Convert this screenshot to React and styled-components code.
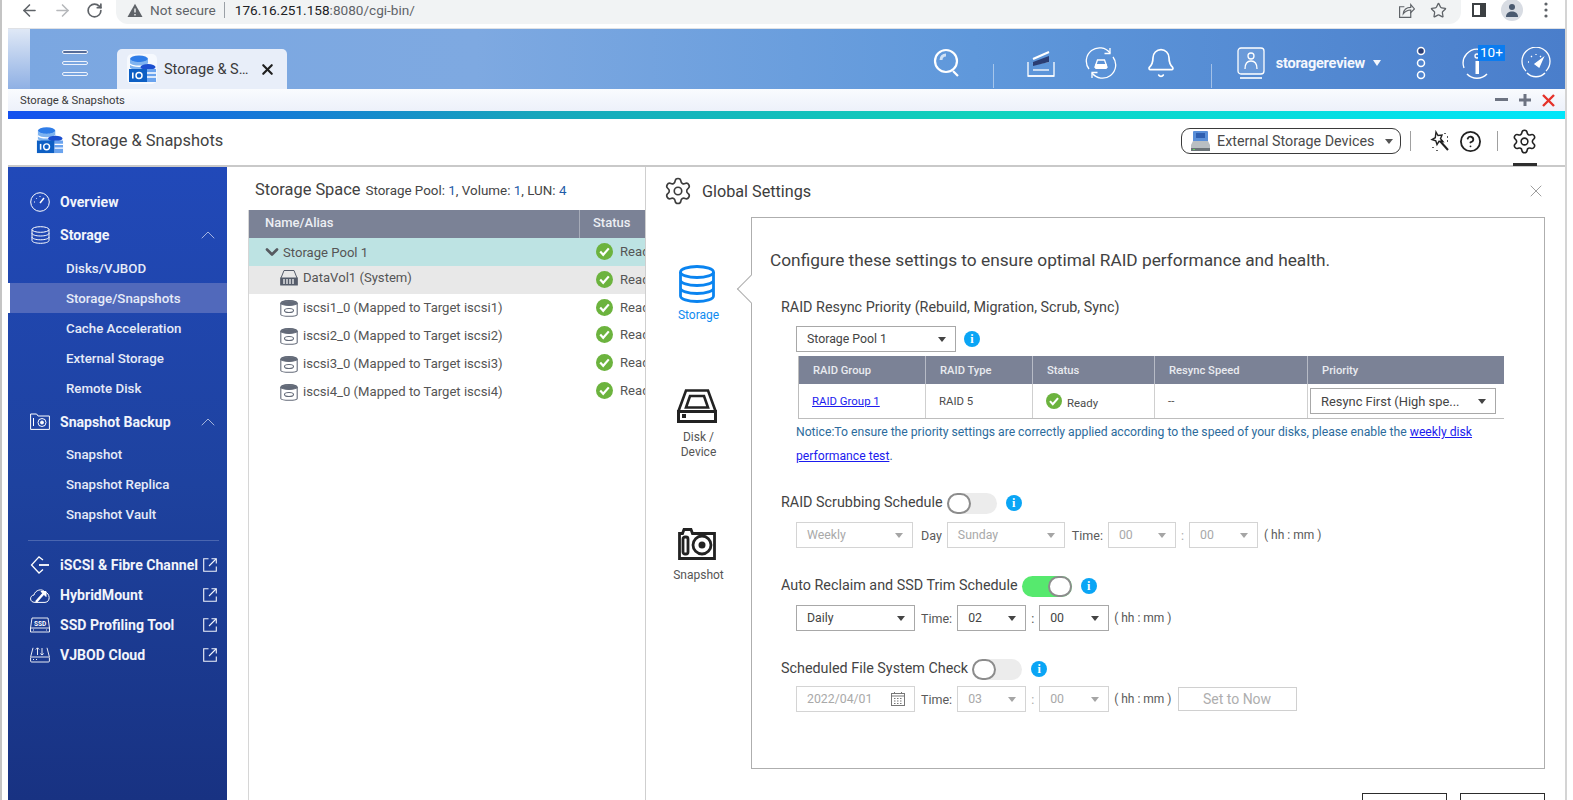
import React from 'react';
import styled, { createGlobalStyle } from 'styled-components';
import { Settings, Bell, Star, ArrowLeft, ArrowRight, RotateCw, ChevronUp, ChevronDown, X, HelpCircle } from 'lucide-react';

const Global = createGlobalStyle`
  html, body { margin: 0; padding: 0; height: 800px; overflow: hidden; background: #fff; }
  #root { height: 800px; }
  * { box-sizing: border-box; }
`;

const Page = styled.div`
  width: 1573px; height: 800px; overflow: hidden; display: flex; flex-direction: column;
  background: #fff; position: relative; padding: 0 6px 0 6px;
  font-family: Roboto, "Liberation Sans", sans-serif; color: #444;
  border-left: 2px solid #c4c4c4;
`;

const Shell = styled.div`
  flex: 1; display: flex; flex-direction: column; min-height: 0; border-right: 2px solid #d4d4d4;
`;

/* Browser toolbar */
const Toolbar = styled.div`height: 29px; flex: none; display: flex; align-items: flex-start; background: #fff; border-bottom: 1px solid #dfe1e5;`;
const NavIcons = styled.div`width: 108px; flex: none; height: 20px; display: flex; align-items: center; color: #5f6368; gap: 14px; padding-left: 12px;`;
const Omni = styled.div`
  width: 1345px; height: 24px; flex: none; background: #f1f3f4; border-radius: 0 0 12px 12px;
  display: flex; align-items: center; padding: 0 14px 4px 11px; font-size: 13.6px; color: #202124;
`;
const NotSecure = styled.span`color: #5f6368; margin-left: 7px; padding-right: 8px; border-right: 1px solid #9aa0a6; line-height: 16px; margin-right: 10px; font-size: 13.6px;`;
const Dim = styled.span`color: #5f6368;`;
const OmniEnd = styled.div`margin-left: auto; display: flex; gap: 15px; align-items: center; color: #5f6368;`;
const ToolRight = styled.div`flex: 1; height: 20px; display: flex; align-items: center; gap: 15px; padding-left: 11px; color: #5f6368;`;
const Avatar = styled.div`width: 22px; height: 22px; border-radius: 50%; background: #d8dce3; display: flex; align-items: center; justify-content: center;`;
const Dots = styled.span`display: flex; margin-left: 6px;`;

/* QTS top bar */
const TopBar = styled.div`
  height: 60px; flex: none; display: flex; position: relative; color: #fff;
  background: linear-gradient(90deg, #7ba7e1 0%, #7ea9e1 30%, #5f98db 62%, #4a7ecb 100%);
`;
const TopEdge = styled.div`width: 22px; flex: none; background: linear-gradient(180deg, #dfe8f6, #8fb0e4);`;
const Burger = styled.div`width: 26px; margin: 21px 0 0 32px; flex: none; display: flex; flex-direction: column; gap: 7px;`;
const BurgerBar = styled.div`height: 4px; border-radius: 2px; border: 1.5px solid #eef3fc; background: ${p => p.$dark ? '#556c99' : 'transparent'};`;
const Tab = styled.div`
  width: 170px; height: 40px; margin: 20px 0 0 29px; flex: none; background: #e8eef9; border-radius: 5px 5px 0 0;
  display: flex; align-items: center; padding-left: 10px; color: #3a3a3a; font-size: 14.5px;
`;
const TabLogo = styled.span`width: 30px; height: 30px; display: flex; border-radius: 5px; background: #f6f9fe;`;
const TabText = styled.span`margin-left: 7px; white-space: nowrap;`;
const TabClose = styled.span`margin-left: auto; margin-right: 11px; display: flex; color: #1f1f1f;`;
const TopIcons = styled.div`margin-left: auto; height: 100%; display: flex; align-items: center; padding: 8px 14px 0 0;`;
const TopIcon = styled.div`margin-left: ${p => p.$ml || 0}px; display: flex; align-items: center; position: relative;`;
const TopSep = styled.div`width: 1px; height: 24px; margin: 26px 0 0 ${p => p.$ml}px; background: rgba(255,255,255,.45);`;
const UserName = styled.span`font-size: 14.5px; font-weight: 700; margin-left: 11px; letter-spacing: -.2px; color: #f4f7fd;`;
const UserCaret = styled.span`width: 0; height: 0; margin-left: 8px; border: 4px solid transparent; border-top: 6px solid #f4f7fd; border-bottom: 0;`;
const Badge = styled.span`position: absolute; top: -2px; left: 17px; background: #0a7cf0; color: #fff; font-size: 13.5px; line-height: 15px; padding: 0 2px; height: 16px;`;

/* Window title */
const WinBar = styled.div`height: 22px; flex: none; display: flex; align-items: center; padding: 0 10px 0 12px; background: linear-gradient(180deg, #f9fbfe, #edf1fa); font-size: 11.3px; color: #3a3a3a;`;
const WinCtl = styled.div`margin-left: auto; display: flex; align-items: center; gap: 11px;`;
const Rainbow = styled.div`height: 8px; flex: none; background: linear-gradient(90deg, #1450ef 0%, #16a6bc 34%, #10d2bc 62%, #00e6fa 100%);`;

/* App header */
const AppHead = styled.div`height: 48px; flex: none; display: flex; align-items: center; padding: 0 27px 4px 27px; border-bottom: 2px solid #c9c9c9; background: #fff; position: relative;`;
const AppTitle = styled.div`font-size: 16.4px; color: #424242; margin-left: 7px;`;
const HeadRight = styled.div`margin: 2px 0 0 auto; display: flex; align-items: center; color: #222;`;
const DevButton = styled.div`
  width: 220px; height: 26px; border: 1.5px solid #3a3a3a; border-radius: 9px; display: flex; align-items: center; padding: 0 7px 0 8px;
  font-size: 14.3px; color: #4a4a4a; white-space: nowrap;
`;
const DevCaret = styled.span`margin-left: auto; width: 0; height: 0; border: 4px solid transparent; border-top: 5px solid #555; border-bottom: 0;`;
const HeadSep = styled.div`width: 1px; height: 20px; background: #a0a0a0; margin-left: ${p => p.$ml}px;`;
const HeadIcon = styled.div`margin-left: ${p => p.$ml}px; display: flex;`;
const GearMark = styled.div`position: absolute; right: 28px; bottom: -1px; width: 24px; height: 3px; background: #2e2e2e;`;

/* Body */
const Body = styled.div`flex: 1; min-height: 0; display: flex;`;
const Side = styled.nav`width: 219px; flex: none; padding-top: 18px; color: #eef2fb; background: linear-gradient(180deg, #2149b9 0%, #1e429f 50%, #183282 100%);`;
const SideMain = styled.div`height: ${p => p.$h || 33}px; display: flex; align-items: center; font-size: 14.1px; font-weight: 700; padding: 0 10px 0 22px; white-space: nowrap; color: #f1f4fb;`;
const SideIco = styled.span`width: 20px; height: 20px; display: flex; align-items: center; justify-content: center; flex: none; margin-right: 10px;`;
const SideEnd = styled.span`margin-left: auto; display: flex; opacity: ${p => p.$o || 1}; margin-right: ${p => p.$mr || 0}px;`;
const SideSub = styled.div`
  height: 30px; display: flex; align-items: center; font-size: 13.3px; font-weight: 500; padding-left: ${p => p.$active ? 56 : 58}px;
  color: #e6ebf8; background: ${p => p.$active ? '#5169bb' : 'transparent'}; border-left: ${p => p.$active ? '2px solid #fff' : '0'};
`;
const SideLine = styled.div`height: 1px; margin: 11px 8px 9px 20px; background: #4a66b0;`;
const SideGap = styled.div`height: ${p => p.$h}px;`;

/* Storage list */
const Mid = styled.section`width: 418px; flex: none; overflow: hidden; background: #fff; padding-left: 21px; display: flex; flex-direction: column;`;
const MidTitle = styled.div`height: 43px; flex: none; display: flex; align-items: center; padding: 2px 0 0 7px; white-space: nowrap; color: #424242; font-size: 16.4px;`;
const MidSmall = styled.span`font-size: 13.4px; margin-left: 5px; color: #444; padding-top: 1px;`;
const Num = styled.span`color: #1f5ca8;`;
const TableWrap = styled.div`flex: 1; border-left: 1px solid #d6d6d6;`;
const GRow = styled.div`
  height: 28px; display: grid; grid-template-columns: 330px 100px; align-items: center;
  background: ${p => p.$bg || 'transparent'}; color: #555; font-size: 13.1px; white-space: nowrap;
`;
const HeadCell = styled.div`height: 100%; display: flex; align-items: center; font-size: 13px; font-weight: 500; color: #eceef3; background: #7b8296; padding: 0 0 3px ${p => p.$pl}px; border-left: ${p => p.$b ? '1px solid #a6abb8' : '0'};`;
const NameCell = styled.div`display: flex; align-items: center; padding: 0 0 ${p => p.$pb ?? 1}px ${p => p.$pl}px; color: #555;`;
const NameIcon = styled.span`display: flex; margin-right: ${p => p.$mr || 5}px;`;
const StatusCell = styled.div`display: flex; align-items: center; padding: 0 0 ${p => p.$pb ?? 3}px 17px; gap: 7px;`;

/* Global settings panel */
const Panel = styled.section`flex: 1; min-width: 0; border-left: 1px solid #cfcfcf; background: #fff; display: flex; flex-direction: column; overflow: hidden;`;
const PanelHead = styled.div`height: 50px; flex: none; display: flex; align-items: center; padding: 0 19px 2px 17px; color: #3c3c3c; font-size: 16.2px;`;
const PanelTitle = styled.span`margin-left: 9px;`;
const PanelClose = styled.span`margin-left: auto; display: flex; color: #8a8a8a;`;
const PanelBody = styled.div`display: flex; flex: none;`;
const SetNav = styled.div`width: 105px; flex: none; padding-top: 47px;`;
const SetItem = styled.div`height: ${p => p.$h}px; display: flex; flex-direction: column; align-items: center; font-size: 12px; line-height: 15px; text-align: center; color: ${p => p.$on ? '#0e8bf0' : '#555'};`;
const SetIcon = styled.div`height: 40px; display: flex; align-items: center; justify-content: center; padding-right: 3px;`;
const SetLabel = styled.div`margin-top: 4px;`;
const Box = styled.div`width: 794px; height: 552px; flex: none; border: 1px solid #aeaeae; position: relative; padding: 30px 18px 0; background: #fff;`;
const Notch = styled.div`position: absolute; left: -11px; top: 61px; width: 20px; height: 20px; background: #fff; border-left: 1px solid #aeaeae; border-bottom: 1px solid #aeaeae; transform: rotate(45deg);`;
const Intro = styled.div`font-size: 17.3px; line-height: 24px; color: #424242; white-space: nowrap;`;
const Section = styled.div`padding-left: 11px; margin-top: ${p => p.$mt}px;`;
const Heading = styled.div`display: flex; align-items: center; font-size: 14.35px; line-height: 22px; color: #444; white-space: nowrap;`;
const Controls = styled.div`display: flex; align-items: center; margin: ${p => p.$mt ?? 8}px 0 0 15px; font-size: 12.5px; color: ${p => p.$off ? '#5a5a5a' : '#555'}; white-space: nowrap;`;
const Sel = styled.div`
  width: ${p => p.$w}px; height: 26px; margin: 0 ${p => p.$mr || 0}px 0 ${p => p.$ml || 0}px; flex: none; display: flex; align-items: center; padding: 0 9px 0 10px;
  border: 1px solid ${p => p.$off ? '#d4d4d4' : '#a8a8a8'}; color: ${p => p.$off ? '#a9a9a9' : '#444'}; font-size: ${p => p.$fs || 12.3}px; background: #fff; white-space: nowrap;
`;
const Caret = styled.span`margin-left: auto; width: 0; height: 0; border: 4.5px solid transparent; border-top: 5.5px solid ${p => p.$off ? '#a5a5a5' : '#444'}; border-bottom: 0;`;
const Info = styled.span`width: 16px; height: 16px; border-radius: 50%; background: #0aa5f5; color: #fff; margin-left: ${p => p.$ml || 9}px; display: flex; align-items: center; justify-content: center; font: 700 12px "Liberation Serif", serif; flex: none;`;
const Switch = styled.span`width: 50px; height: 21px; border-radius: 11px; margin-left: 4px; flex: none; position: relative; background: ${p => p.$on ? '#56e96e' : '#ececec'};`;
const Knob = styled.span`position: absolute; top: 0; ${p => p.$on ? 'right: 0;' : 'left: 0;'} width: 24px; height: 21px; border-radius: 11px; background: #fff; border: 2px solid #8c8c8c;`;
const RTable = styled.div`margin: 4px 0 0 17px; width: 706px; border-left: 1px solid #bdbdbd; border-bottom: 1px solid #bdbdbd;`;
const RGrid = styled.div`display: grid; grid-template-columns: 126px 107px 122px 153px 197px; height: ${p => p.$h}px; align-items: stretch; ${p => p.$head && 'background:#7b8296;color:#e9ebf0;font-weight:500;'}`;
const RCell = styled.div`display: flex; align-items: center; padding-left: ${p => p.$pl || 13}px; font-size: ${p => p.$head ? 11.2 : 11.4}px; white-space: nowrap; border-left: ${p => p.$first ? '0' : `1px solid ${p.$head ? '#b7bbc6' : '#cfcfcf'}`}; color: ${p => p.$head ? '#e9ebf0' : '#4c4c4c'};`;
const Link = styled.a`color: #1b1bee; text-decoration: underline;`;
const ReadyText = styled.span`margin-left: 5px; padding-top: 3px;`;
const Notice = styled.div`margin: 1px 0 0 15px; font-size: 12.18px; line-height: 24px; color: #2c6b9c; white-space: nowrap;`;
const Lbl = styled.span`margin: 0 ${p => p.$mr || 0}px 0 ${p => p.$ml || 0}px; color: ${p => p.$light ? '#aaa' : 'inherit'}; font-size: ${p => p.$fs || 12.5}px;`;
const DateIco = styled.span`margin-left: auto; display: flex; color: #777;`;
const NowBtn = styled.div`width: 119px; height: 24px; margin-left: 6px; border: 1px solid #d0d0d0; color: #aeaeae; font-size: 14px; display: flex; align-items: center; justify-content: center;`;
const Foot = styled.div`display: flex; justify-content: flex-end; gap: 13px; width: 899px; margin-top: 24px;`;
const FootBtn = styled.div`width: 85px; height: 40px; border: 1px solid #2c2c2c; background: #fff;`;

/* Icons */
const AppLogo = ({ s = 30 }) => (
  <svg width={s} height={s} viewBox="0 0 30 30">
    <ellipse cx="12" cy="5" rx="9" ry="3.6" fill="#2f7de8" />
    <path d="M3 5v13h18V5c-2 4-16 4-18 0z" fill="#7fb4f0" />
    <path d="M3 10c3 3 15 3 18 0M3 14.5c3 3 15 3 18 0" stroke="#fff" fill="none" strokeWidth="1.4" />
    <ellipse cx="21" cy="13" rx="7.5" ry="3" fill="#1c4fd0" />
    <path d="M20 15h9v13h-9z" fill="#6aa3ee" />
    <path d="M20 19h9M20 23h9" stroke="#fff" strokeWidth="1.3" />
    <rect x="2" y="15" width="18" height="13" fill="#0d5fc4" />
    <rect x="5" y="18.5" width="1.6" height="6" fill="#fff" />
    <circle cx="12" cy="21.5" r="3" fill="none" stroke="#fff" strokeWidth="1.5" />
  </svg>
);
const Check = ({ s = 17 }) => (
  <svg width={s} height={s} viewBox="0 0 17 17" style={{ flex: 'none' }}>
    <circle cx="8.5" cy="8.5" r="8.5" fill="#6cb33e" />
    <path d="M4.2 8.6l3 3.2 5.6-6.4" fill="none" stroke="#fff" strokeWidth="2.2" />
  </svg>
);
const ExtLink = () => (
  <svg width="14" height="14" viewBox="0 0 14 14" fill="none" stroke="#f1f4fb" strokeWidth="1.1">
    <path d="M5.5.7H.7v12.6h12.6V8.5M8.5.7h4.8v4.8" /><path d="M13 1L6 8" />
  </svg>
);
const Vol = () => (
  <svg width="18" height="18" viewBox="0 0 18 18" fill="none" stroke="#636a78" strokeWidth="1.1">
    <path d="M.8 15.5V4.5C.8 3 4 1.5 9 1.5s8.2 1.5 8.2 3v11c0 1-4 1.8-8.2 1.8S.8 16.5.8 15.5z" />
    <path d="M.8 4.5C3 1 15 1 17.2 4.5 15 7 3 7 .8 4.5z" fill="#636a78" />
    <ellipse cx="9" cy="11.5" rx="4.5" ry="2" />
  </svg>
);
const Raid = () => (
  <svg width="18" height="17" viewBox="0 0 18 17" fill="none" stroke="#555c6a" strokeWidth="1">
    <path d="M1 9l3-7.5h10L17 9" />
    <rect x=".7" y="9" width="16.6" height="7" fill="#555c6a" />
    <path d="M4 10v5M7 10v5M10 10v5M13 10v5" stroke="#fff" strokeWidth="1.2" />
  </svg>
);

const Select = ({ w, off, fs, children, ml, mr }) => (
  <Sel $w={w} $off={off} $fs={fs} $ml={ml} $mr={mr}>{children}<Caret $off={off} /></Sel>
);

const iscsi = ['iscsi1_0 (Mapped to Target iscsi1)', 'iscsi2_0 (Mapped to Target iscsi2)', 'iscsi3_0 (Mapped to Target iscsi3)', 'iscsi4_0 (Mapped to Target iscsi4)'];

export default function App() {
  return (
    <Page>
      <Global />
      <Shell>
        <Toolbar>
          <NavIcons>
            <ArrowLeft size={19} color="#5f6368" strokeWidth={2} />
            <ArrowRight size={19} color="#b6b8bb" strokeWidth={2} />
            <RotateCw size={17} color="#5f6368" strokeWidth={2.4} />
          </NavIcons>
          <Omni>
            <svg width="16" height="15" viewBox="0 0 16 15"><path d="M8 .8L15.5 14H.5z" fill="#5f6368" /><path d="M8 5.5v4M8 11v1.5" stroke="#f1f3f4" strokeWidth="1.4" /></svg>
            <NotSecure>Not secure</NotSecure>
            <span>176.16.251.158<Dim>:8080/cgi-bin/</Dim></span>
            <OmniEnd>
              <svg width="17" height="17" viewBox="0 0 16 16" fill="none" stroke="#5f6368" strokeWidth="1.1"><path d="M12 9.5V14.5H1.5V4.5H6" /><path d="M5 11c.5-4 3-6 7-6V2.5l3.500 4-3.500 3.500V7.500c-3 0-5 1-7 3.500z" /></svg>
              <Star size={17} color="#5f6368" strokeWidth={1.8} />
            </OmniEnd>
          </Omni>
          <ToolRight>
            <svg width="14" height="14" viewBox="0 0 14 14"><rect x="1" y="1" width="12" height="12" fill="none" stroke="#3c4043" strokeWidth="2" /><rect x="8" y="1" width="5" height="12" fill="#3c4043" /></svg>
            <Avatar><svg width="14" height="14" viewBox="0 0 14 14" fill="#4a5a70"><circle cx="7" cy="4" r="3" /><path d="M1 14c0-4 3-5.5 6-5.5s6 1.500 6 5.500z" /></svg></Avatar>
            <Dots><svg width="4" height="16" viewBox="0 0 4 16" fill="#5f6368"><circle cx="2" cy="2" r="1.6" /><circle cx="2" cy="8" r="1.6" /><circle cx="2" cy="14" r="1.6" /></svg></Dots>
          </ToolRight>
        </Toolbar>

        <TopBar>
          <TopEdge />
          <Burger><BurgerBar $dark /><BurgerBar /><BurgerBar /></Burger>
          <Tab>
            <TabLogo><AppLogo /></TabLogo>
            <TabText>Storage &amp; S…</TabText>
            <TabClose><X size={17} strokeWidth={3} /></TabClose>
          </Tab>
          <TopIcons>
            <TopIcon>
              <svg width="30" height="30" viewBox="0 0 30 30" fill="none" stroke="#fff" strokeWidth="2.2"><circle cx="14" cy="13" r="11" /><path d="M21 23l5 5" /><path d="M9 12c0-3 2-5 5-5" strokeWidth="3" opacity=".7" /></svg>
            </TopIcon>
            <TopSep $ml={31} />
            <TopIcon $ml={33}>
              <svg width="28" height="28" viewBox="0 0 28 28" fill="none" stroke="#fff" strokeWidth="1.3"><path d="M1 13v14h26V13" /><path d="M1 27h26" /><path d="M6 21h16" /><path d="M6 10l16-7M6 15l16-3" strokeWidth="2" /><path d="M6 13l16-6v6L6 17z" fill="#2a3d73" stroke="none" /></svg>
            </TopIcon>
            <TopIcon $ml={30}>
              <svg width="32" height="32" viewBox="0 0 32 32" fill="none" stroke="#fff" strokeWidth="1.3"><path d="M4 22A13 13 0 0 1 25 6M28 10a13 13 0 0 1-21 16" /><path d="M25 1v5.500h-5.500M7 31v-5.500h5.500" /><path d="M10 20l2.500-7h7l2.500 7z" /><rect x="10" y="17" width="12" height="5" rx="1" fill="#fff" stroke="none" /></svg>
            </TopIcon>
            <TopIcon $ml={28}>
              <Bell size={32} strokeWidth={1.25} />
            </TopIcon>
            <TopSep $ml={34} />
            <TopIcon $ml={25}>
              <svg width="28" height="32" viewBox="0 0 28 32" fill="none" stroke="#fff" strokeWidth="1.3"><rect x="1" y="1" width="26" height="26" rx="3" fill="rgba(255,255,255,.12)" /><circle cx="14" cy="9" r="3" /><path d="M8 22c0-6 3-8 6-8s6 2 6 8" /><path d="M3 31h22" strokeWidth="1.6" /></svg>
              <UserName>storagereview</UserName>
              <UserCaret />
            </TopIcon>
            <TopIcon $ml={35}>
              <svg width="10" height="34" viewBox="0 0 10 34" fill="none" stroke="#fff" strokeWidth="1.5"><circle cx="5" cy="5" r="3.5" fill="#2a3d73" /><circle cx="5" cy="17" r="3.5" /><circle cx="5" cy="29" r="3.5" /></svg>
            </TopIcon>
            <TopIcon $ml={35}>
              <svg width="32" height="32" viewBox="0 0 32 32" fill="none" stroke="#fff" strokeWidth="1.3"><path d="M3 21A14 14 0 0 1 19 2.500" /><path d="M6 27a14 14 0 0 0 20 0" strokeWidth="1.500" /><rect x="14.500" y="14" width="3.500" height="13" fill="#fff" stroke="none" /><circle cx="16" cy="9" r="2" /></svg>
              <Badge>10+</Badge>
            </TopIcon>
            <TopIcon $ml={28}>
              <svg width="30" height="32" viewBox="0 0 30 32" fill="none" stroke="#fff" strokeWidth="1.3"><path d="M5 24A14 14 0 1 1 25 24" /><path d="M6 26c5 5 13 5 18 0" strokeWidth="1.500" /><path d="M14 17l8-6-4 9z" fill="#fff" /><path d="M7 15h1M10 9l1 1M15 7v1M20 9l-1 1" /></svg>
            </TopIcon>
          </TopIcons>
        </TopBar>

        <WinBar>
          Storage &amp; Snapshots
          <WinCtl>
            <svg width="13" height="4" viewBox="0 0 13 4"><rect width="13" height="3" fill="#6d7381" /></svg>
            <svg width="12" height="12" viewBox="0 0 12 12"><path d="M4.500 0h3v4.500H12v3H7.500V12h-3V7.500H0v-3h4.500z" fill="#6d7381" /></svg>
            <svg width="13" height="13" viewBox="0 0 13 13"><path d="M1 1l11 11M12 1L1 12" stroke="#e5322a" strokeWidth="2.400" /></svg>
          </WinCtl>
        </WinBar>
        <Rainbow />

        <AppHead>
          <AppLogo s={29} />
          <AppTitle>Storage &amp; Snapshots</AppTitle>
          <HeadRight>
            <DevButton>
              <svg width="21" height="24" viewBox="0 0 21 24" style={{ marginRight: 6 }}><rect x="3" y="2" width="15" height="12" rx="1" fill="#5a8fd8" /><rect x="6" y="4" width="9" height="5" fill="#2f5fb0" /><path d="M3 12h15l2 4v5H1v-5z" fill="#b9bfc2" /><rect x="1" y="19" width="19" height="3" fill="#6c7478" /><rect x="3" y="20" width="2" height="1" fill="#5fd35f" /></svg>
              External Storage Devices
              <DevCaret />
            </DevButton>
            <HeadSep $ml={9} />
            <HeadIcon $ml={17}>
              <svg width="23" height="23" viewBox="0 0 23 23" fill="none" stroke="#222" strokeWidth="1.4"><path d="M8 2l2 3.500 4-.5-1.500 3.700 2.500 3-4-.4-2 3.200-1.200-3.700L4 9.500l3.300-1.800z" /><path d="M12 11l8 9" strokeWidth="2" /><path d="M17 3v2M20 7h-2M19 11h1M5 17v1M9 20v1" strokeDasharray="1 1" /></svg>
            </HeadIcon>
            <HeadIcon $ml={8}><HelpCircle size={23} strokeWidth={1.9} /></HeadIcon>
            <HeadSep $ml={15} />
            <HeadIcon $ml={13}><Settings size={27} strokeWidth={1.4} /></HeadIcon>
          </HeadRight>
          <GearMark />
        </AppHead>

        <Body>
          <Side>
            <SideMain>
              <SideIco><svg width="20" height="20" viewBox="0 0 20 20" fill="none" stroke="#fff" strokeWidth="1"><circle cx="10" cy="10" r="9.300" /><path d="M10 11l4-5" strokeWidth="1.500" /><path d="M4 10h1M6 6l.7.7M10 4v1" /></svg></SideIco>
              Overview
            </SideMain>
            <SideMain>
              <SideIco><svg width="19" height="18" viewBox="0 0 19 18" fill="none" stroke="#fff" strokeWidth="1"><ellipse cx="9.500" cy="3.500" rx="8.500" ry="2.800" /><path d="M1 3.500v11c0 1.600 3.800 2.800 8.500 2.800s8.500-1.200 8.500-2.800v-11M1 7.200c0 1.600 3.800 2.800 8.500 2.800S18 8.800 18 7.200M1 11c0 1.600 3.800 2.800 8.500 2.800S18 12.600 18 11" /></svg></SideIco>
              Storage
              <SideEnd $o={.8} $mr={-3}><ChevronUp size={24} strokeWidth={.8} /></SideEnd>
            </SideMain>
            <SideGap $h={2} />
            <SideSub>Disks/VJBOD</SideSub>
            <SideSub $active>Storage/Snapshots</SideSub>
            <SideSub>Cache Acceleration</SideSub>
            <SideSub>External Storage</SideSub>
            <SideSub>Remote Disk</SideSub>
            <SideGap $h={2} />
            <SideMain>
              <SideIco><svg width="20" height="17" viewBox="0 0 20 17" fill="none" stroke="#fff" strokeWidth="1"><path d="M.6 16.400V1h6l1.500 2h11.300v13.400z" /><circle cx="12" cy="9.500" r="4" /><circle cx="12" cy="9.500" r="1.500" fill="#fff" /><path d="M3.500 5v8" /></svg></SideIco>
              Snapshot Backup
              <SideEnd $o={.8} $mr={-3}><ChevronUp size={24} strokeWidth={.8} /></SideEnd>
            </SideMain>
            <SideGap $h={1} />
            <SideSub>Snapshot</SideSub>
            <SideSub>Snapshot Replica</SideSub>
            <SideSub>Snapshot Vault</SideSub>
            <SideLine />
            <SideMain $h={30}>
              <SideIco><svg width="20" height="18" viewBox="0 0 20 18" fill="none" stroke="#fff" strokeWidth="1.300"><path d="M13 4L9 .9 1.500 9 9 17l4-3.500" /><path d="M9 9h10" strokeWidth="1.800" /></svg></SideIco>
              iSCSI &amp; Fibre Channel
              <SideEnd><ExtLink /></SideEnd>
            </SideMain>
            <SideMain $h={30}>
              <SideIco><svg width="20" height="15" viewBox="0 0 20 15" fill="none" stroke="#fff" strokeWidth="1"><path d="M5 14.400c-6 0-5.500-7-1-7.400C5 2 12 0 15 4c5 1 6 10 0 10.400z" /><path d="M6 14l8-9" strokeWidth="2.500" /><path d="M11 3.500h5v5z" fill="#fff" /></svg></SideIco>
              HybridMount
              <SideEnd><ExtLink /></SideEnd>
            </SideMain>
            <SideMain $h={30}>
              <SideIco><svg width="20" height="16" viewBox="0 0 20 16" fill="none" stroke="#fff" strokeWidth=".9"><path d="M2 1h16l1.500 10v4H.5v-4z" /><path d="M.5 11h19M3 13h1M16 13h1" /><text x="10" y="9" fontSize="6.500" fontWeight="700" textAnchor="middle" fill="#fff" stroke="none" fontFamily="Roboto">SSD</text></svg></SideIco>
              SSD Profiling Tool
              <SideEnd><ExtLink /></SideEnd>
            </SideMain>
            <SideMain $h={30}>
              <SideIco><svg width="20" height="16" viewBox="0 0 20 16" fill="none" stroke="#fff" strokeWidth=".9"><path d="M.6 10L3 .8M19.400 10L17 .8" /><rect x=".6" y="10" width="18.800" height="5" rx="1" /><path d="M7.500 8V1M5.800 2.500l1.700-1.700 1.700 1.700M12 1v7M10.300 6.500L12 8l1.700-1.500" /><path d="M3 12.500h1M6 12.500h1" /></svg></SideIco>
              VJBOD Cloud
              <SideEnd><ExtLink /></SideEnd>
            </SideMain>
          </Side>

          <Mid>
            <MidTitle>
              Storage Space
              <MidSmall>Storage Pool: <Num>1</Num>, Volume: <Num>1</Num>, LUN: <Num>4</Num></MidSmall>
            </MidTitle>
            <TableWrap>
              <GRow>
                <HeadCell $pl={16}>Name/Alias</HeadCell>
                <HeadCell $pl={13} $b>Status</HeadCell>
              </GRow>
              <GRow $bg="#bde3e3">
                <NameCell $pl={13} $pb={0}>
                  <NameIcon $mr={1}><ChevronDown size={20} strokeWidth={3.2} color="#565a60" /></NameIcon>
                  Storage Pool 1
                </NameCell>
                <StatusCell $pb={2}><Check />Ready</StatusCell>
              </GRow>
              <GRow $bg="#e8e8e8">
                <NameCell $pl={31} $pb={5}><NameIcon><Raid /></NameIcon>DataVol1 (System)</NameCell>
                <StatusCell $pb={2}><Check />Ready</StatusCell>
              </GRow>
              {iscsi.map((t, i) => (
                <GRow key={t}>
                  <NameCell $pl={31}><NameIcon><Vol /></NameIcon>{t}</NameCell>
                  <StatusCell $pb={i === 0 ? 2 : 3}><Check />Ready</StatusCell>
                </GRow>
              ))}
            </TableWrap>
          </Mid>

          <Panel>
            <PanelHead>
              <Settings size={30} strokeWidth={1.3} />
              <PanelTitle>Global Settings</PanelTitle>
              <PanelClose><X size={20} strokeWidth={1} /></PanelClose>
            </PanelHead>
            <PanelBody>
              <SetNav>
                <SetItem $h={122} $on>
                  <SetIcon>
                    <svg width="38" height="38" viewBox="0 0 38 38" fill="none" stroke="#0a84f0" strokeWidth="2.800"><ellipse cx="19" cy="7" rx="16.500" ry="5.500" /><path d="M2.500 7v24c0 3 7.400 5.500 16.500 5.500S35.500 34 35.500 31V7M2.500 15c0 3 7.400 5.500 16.500 5.500S35.500 18 35.500 15M2.500 23c0 3 7.400 5.500 16.500 5.500S35.500 26 35.500 23" /></svg>
                  </SetIcon>
                  <SetLabel>Storage</SetLabel>
                </SetItem>
                <SetItem $h={138}>
                  <SetIcon>
                    <svg width="40" height="34" viewBox="0 0 40 34" fill="none" stroke="#222" strokeWidth="2.600"><path d="M1.500 22L9 1.500h22L38.500 22" /><path d="M9 18.500L13 7h14l4 11.500z" /><rect x="0" y="21" width="40" height="13" fill="#222" stroke="none" /><rect x="3" y="24" width="34" height="7" fill="#fff" stroke="none" /><rect x="5" y="25" width="4" height="4" fill="#222" stroke="none" /></svg>
                  </SetIcon>
                  <SetLabel>Disk /<br />Device</SetLabel>
                </SetItem>
                <SetItem $h={100}>
                  <SetIcon>
                    <svg width="38" height="32" viewBox="0 0 38 32" fill="none" stroke="#222" strokeWidth="2.800"><path d="M1.500 30.500V5.500h3l1.500-4h7l1.500 4h22v25z" /><rect x="5" y="9" width="5" height="17" rx="2" /><circle cx="24" cy="17" r="9" /><circle cx="24" cy="17" r="3.500" fill="#222" stroke="none" /></svg>
                  </SetIcon>
                  <SetLabel>Snapshot</SetLabel>
                </SetItem>
              </SetNav>
              <Box>
                <Notch />
                <Intro>Configure these settings to ensure optimal RAID performance and health.</Intro>

                <Section $mt={25}>
                  <Heading>RAID Resync Priority (Rebuild, Migration, Scrub, Sync)</Heading>
                  <Controls $mt={7}>
                    <Select w={160}>Storage Pool 1</Select>
                    <Info $ml={8}>i</Info>
                  </Controls>
                  <RTable>
                    <RGrid $h={28} $head>
                      <RCell $head $first $pl={14}>RAID Group</RCell>
                      <RCell $head $pl={14}>RAID Type</RCell>
                      <RCell $head $pl={14}>Status</RCell>
                      <RCell $head $pl={14}>Resync Speed</RCell>
                      <RCell $head $pl={14}>Priority</RCell>
                    </RGrid>
                    <RGrid $h={34}>
                      <RCell $first><Link>RAID Group 1</Link></RCell>
                      <RCell>RAID 5</RCell>
                      <RCell><Check s={16} /><ReadyText>Ready</ReadyText></RCell>
                      <RCell>--</RCell>
                      <RCell $pl={2}><Select w={186} fs={12.9}>Resync First (High spe...</Select></RCell>
                    </RGrid>
                  </RTable>
                  <Notice>
                    Notice:To ensure the priority settings are correctly applied according to the speed of your disks, please enable the <Link>weekly disk</Link><br />
                    <Link>performance test</Link>.
                  </Notice>
                </Section>

                <Section $mt={24}>
                  <Heading>RAID Scrubbing Schedule<Switch><Knob /></Switch><Info>i</Info></Heading>
                  <Controls $mt={8} $off>
                    <Select w={117} off>Weekly</Select>
                    <Lbl $ml={8} $mr={5}>Day</Lbl>
                    <Select w={118} off>Sunday</Select>
                    <Lbl $ml={7} $mr={5}>Time:</Lbl>
                    <Select w={68} off>00</Select>
                    <Lbl $ml={5} $mr={5} $light>:</Lbl>
                    <Select w={69} off>00</Select>
                    <Lbl $ml={6} $fs={12}>( hh : mm )</Lbl>
                  </Controls>
                </Section>

                <Section $mt={27}>
                  <Heading>Auto Reclaim and SSD Trim Schedule<Switch $on><Knob $on /></Switch><Info>i</Info></Heading>
                  <Controls $mt={8}>
                    <Select w={119}>Daily</Select>
                    <Lbl $ml={6} $mr={5}>Time:</Lbl>
                    <Select w={69}>02</Select>
                    <Lbl $ml={5} $mr={5}>:</Lbl>
                    <Select w={70}>00</Select>
                    <Lbl $ml={5} $fs={12}>( hh : mm )</Lbl>
                  </Controls>
                </Section>

                <Section $mt={27}>
                  <Heading>Scheduled File System Check<Switch><Knob /></Switch><Info>i</Info></Heading>
                  <Controls $mt={6} $off>
                    <Sel $w={119} $off>
                      2022/04/01
                      <DateIco>
                        <svg width="14" height="14" viewBox="0 0 14 14" fill="none" stroke="#777" strokeWidth="1"><rect x=".5" y="1.5" width="13" height="12" /><path d="M.5 4h13M3.500 0v2M10.500 0v2" /><path d="M3 6.500h8M3 9h8M3 11.500h8" strokeDasharray="1.500 1.500" /></svg>
                      </DateIco>
                    </Sel>
                    <Lbl $ml={6} $mr={5}>Time:</Lbl>
                    <Select w={69} off>03</Select>
                    <Lbl $ml={5} $mr={5} $light>:</Lbl>
                    <Select w={70} off>00</Select>
                    <Lbl $ml={5} $fs={12}>( hh : mm )</Lbl>
                    <NowBtn>Set to Now</NowBtn>
                  </Controls>
                </Section>
              </Box>
            </PanelBody>
            <Foot><FootBtn /><FootBtn /></Foot>
          </Panel>
        </Body>
      </Shell>
    </Page>
  );
}
